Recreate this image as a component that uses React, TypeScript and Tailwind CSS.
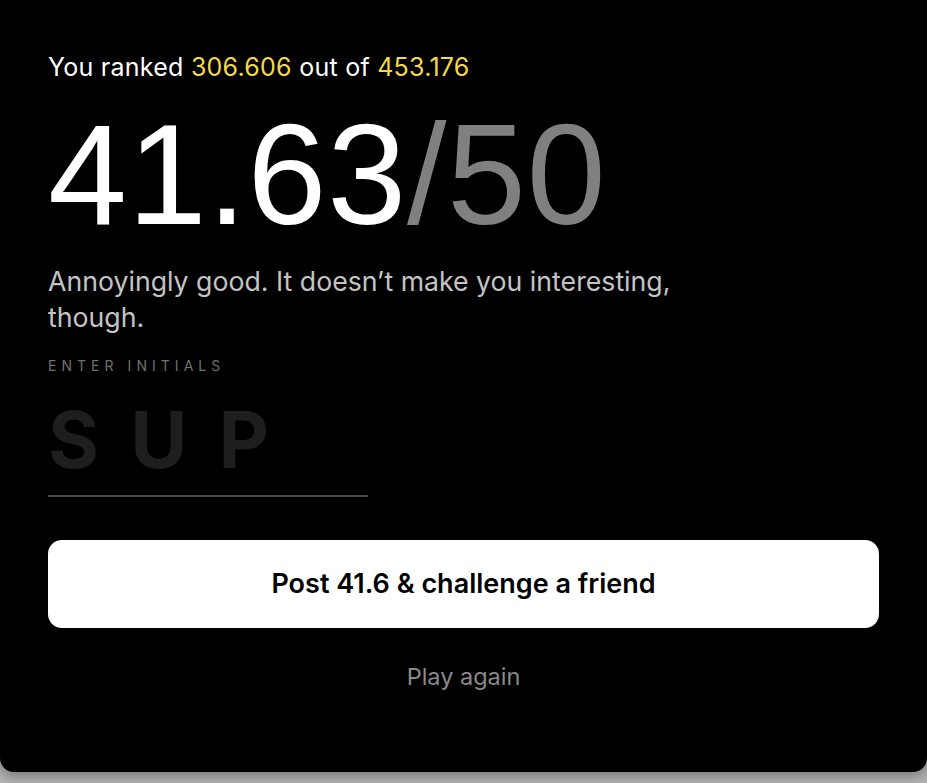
import React from 'react';

const ResultCard: React.FC = () => {
  return (
    <div className="min-h-screen bg-[#b4b4b4] font-['Inter',sans-serif]">
      <div className="bg-black rounded-b-[14px] h-[772px] px-12 pt-[52px] shadow-[0_4px_14px_rgba(0,0,0,0.35)]">
        {/* Rang */}
        <p className="text-[25px] leading-[30px] tracking-[0.01em] text-white">
          You ranked <span className="text-[#f5d94a]">306.606</span> out of{' '}
          <span className="text-[#f5d94a]">453.176</span>
        </p>

        {/* Score */}
        <div className="mt-[22px] text-[142px] leading-none font-['Liberation_Sans',Arial,sans-serif] tracking-[0.005em]">
          <span className="text-white">41.63</span>
          <span className="text-[#808080]">/50</span>
        </div>

        <p className="mt-[17px] max-w-[660px] text-[26.7px] leading-[36px] text-[#c4c4c4]">
          Annoyingly good. It doesn’t make you interesting, though.
        </p>

        <p className="mt-[21px] text-[14px] leading-[20px] tracking-[0.36em] text-[#707070]">
          ENTER INITIALS
        </p>

        <div className="mt-[25px] w-[320px] border-b-2 border-[#484848] pb-[16px]">
          <span className="block text-[78px] leading-none font-bold tracking-[0.4em] text-[#1e1e1e]">
            SUP
          </span>
        </div>

        <button className="mt-[43px] w-full h-[88px] bg-white rounded-[14px] text-[27px] font-semibold text-black">
          Post 41.6 &amp; challenge a friend
        </button>

        <p className="mt-[35px] text-center text-[23.5px] leading-[28px] text-[#8a8a8a]">
          Play again
        </p>
      </div>
    </div>
  );
};

export default function App() {
  return <ResultCard />;
}
